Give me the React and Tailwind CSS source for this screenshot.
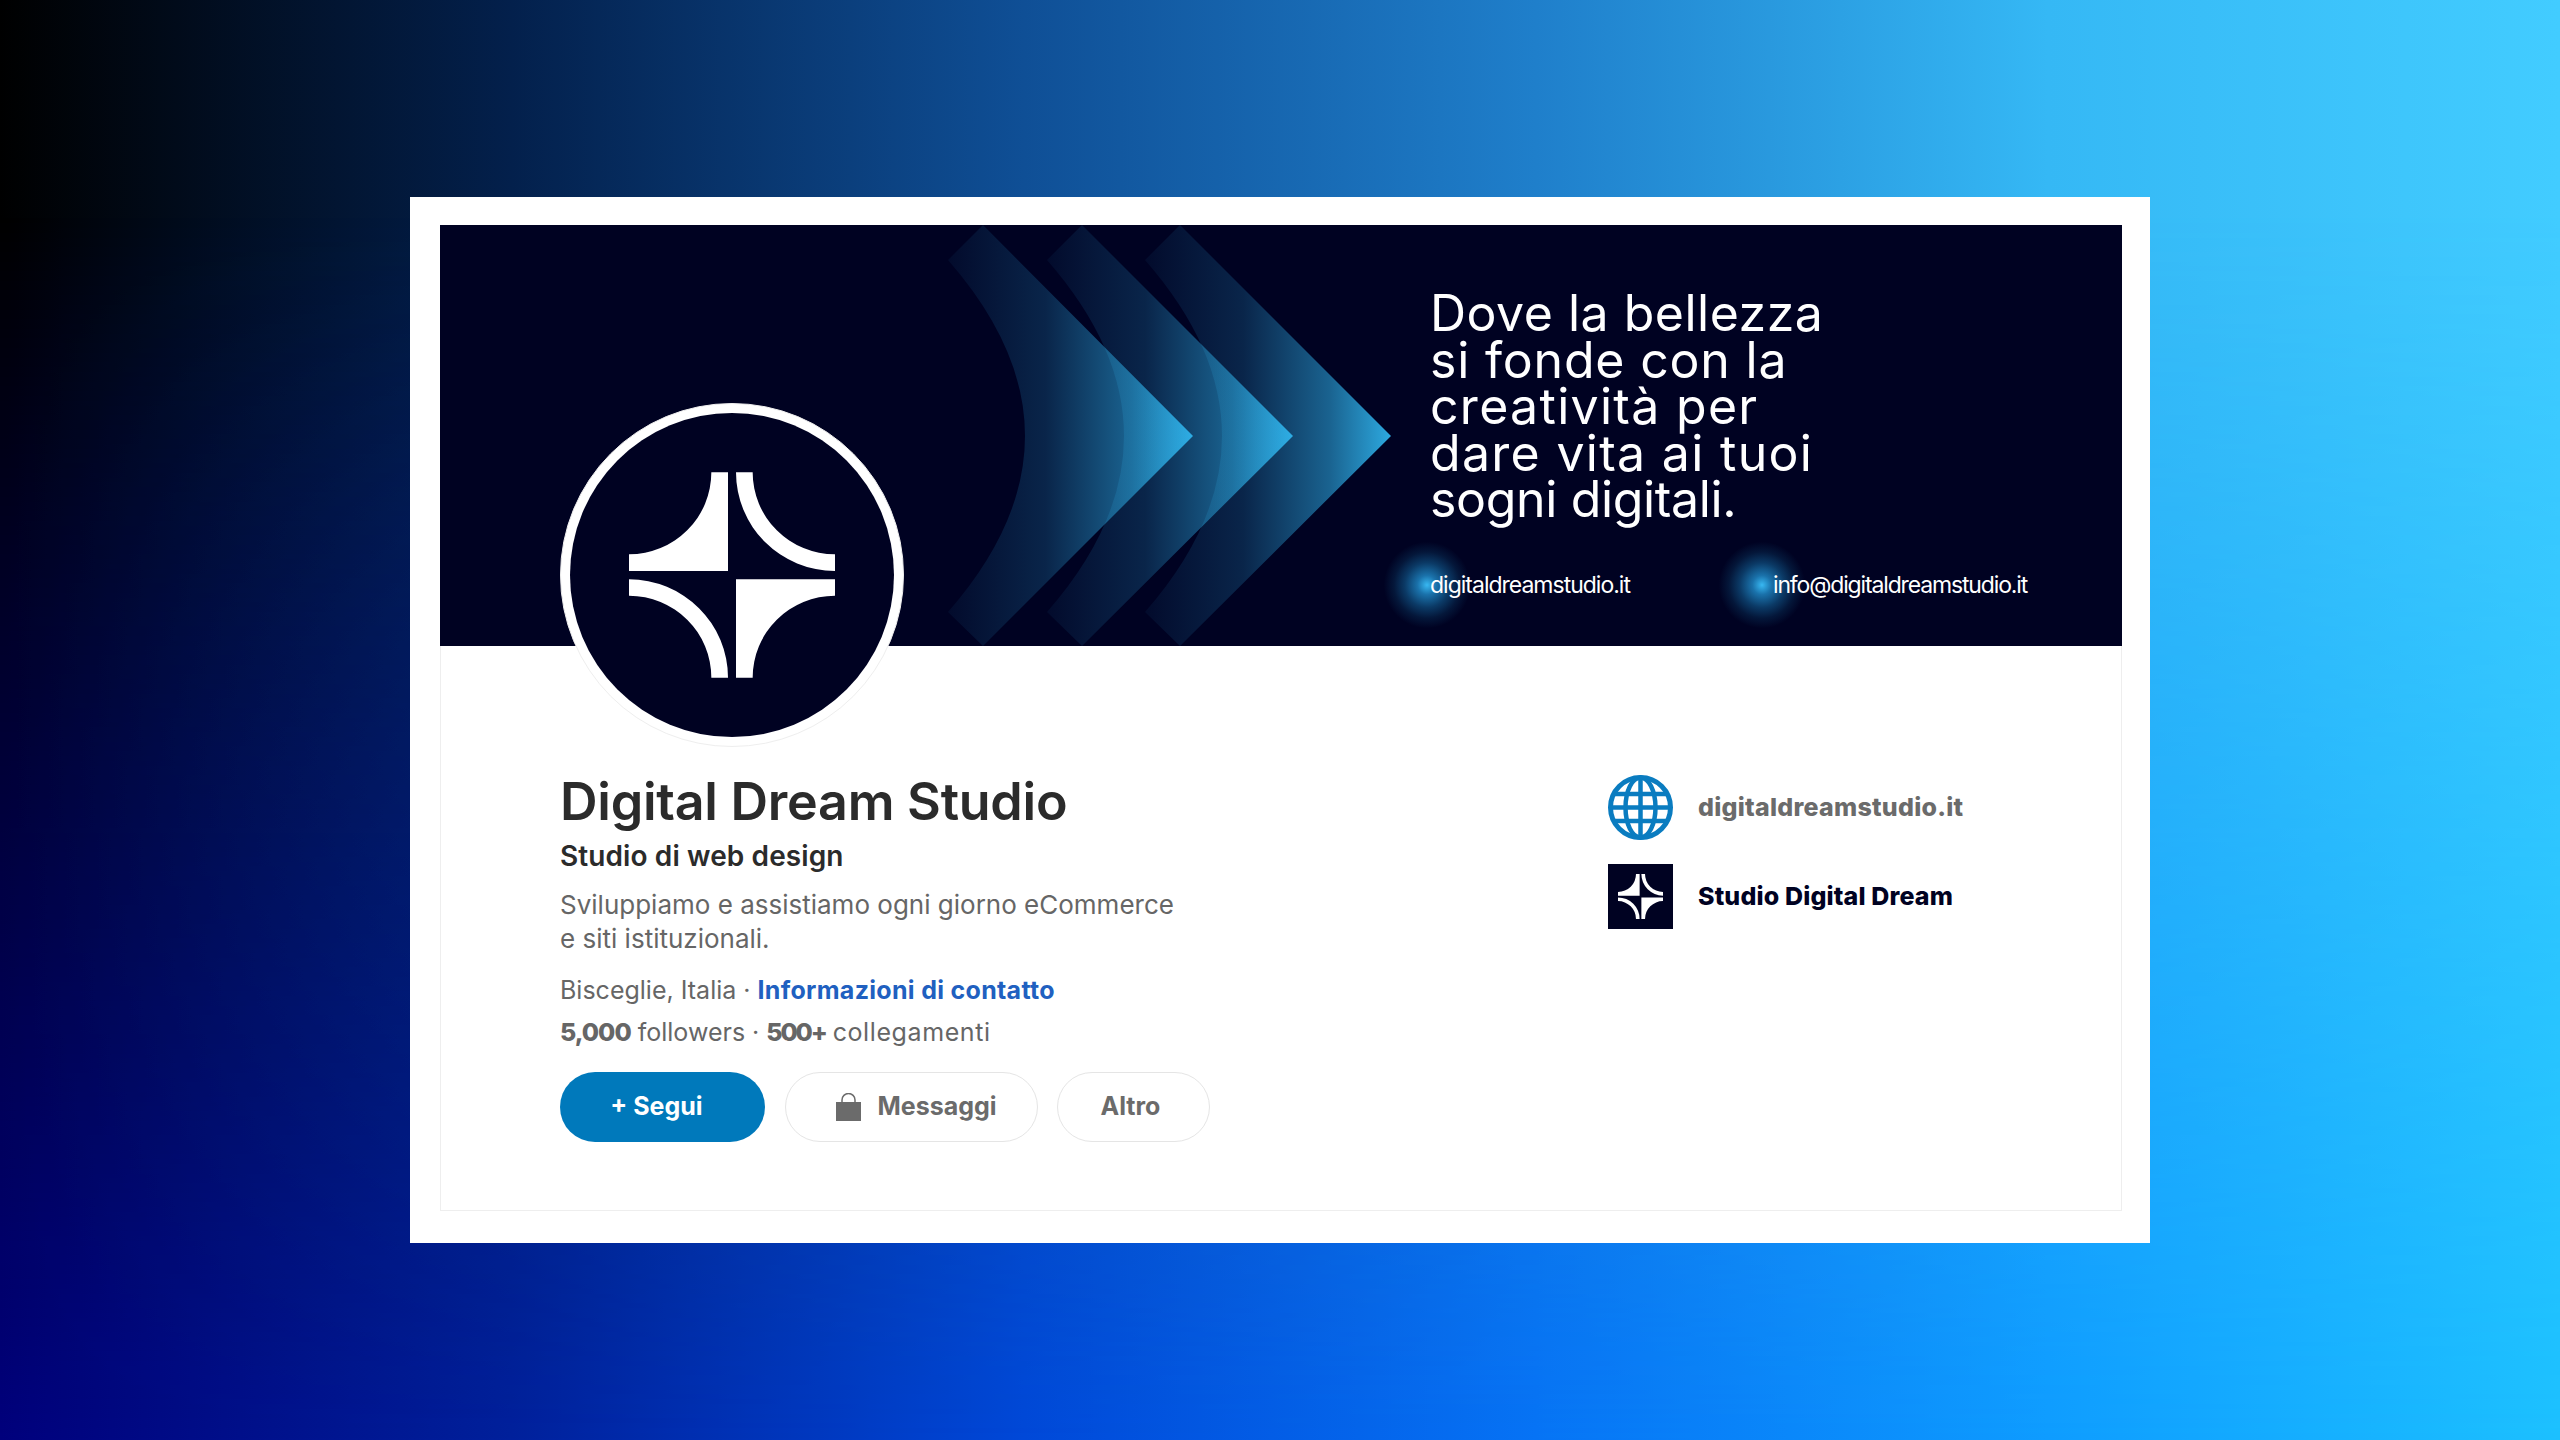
import React from 'react';

function StarLogo({ className }) {
    return (
        <svg className={className} viewBox="57 70 618 616" fill="#ffffff">
            <path d="M304 70H354V366H57V316A247 246 0 0 0 304 70Z" />
            <path d="M378 70H428A247 246 0 0 0 675 316V366A297 296 0 0 1 378 70Z" />
            <path d="M57 391A297 295 0 0 1 354 686H304A247 246 0 0 0 57 440Z" />
            <path d="M378 391H675V440A247 246 0 0 0 428 686H378Z" />
        </svg>
    );
}

function Chevrons() {
    const items = [
        { id: 'c1', top: 983, tip: 1193 },
        { id: 'c2', top: 1082, tip: 1293 },
        { id: 'c3', top: 1180, tip: 1391 },
    ];
    return (
        <svg className="absolute inset-0 w-full h-full" viewBox="440 225 1682 421" preserveAspectRatio="none">
            <defs>
                {items.map((c) => (
                    <linearGradient key={c.id} id={c.id} gradientUnits="userSpaceOnUse" x1={c.top - 35} x2={c.tip} y1="0" y2="0">
                        <stop offset="0" stopColor="#2fb2ea" stopOpacity="0.05" />
                        <stop offset="0.4" stopColor="#2fb2ea" stopOpacity="0.2" />
                        <stop offset="0.75" stopColor="#2fb2ea" stopOpacity="0.55" />
                        <stop offset="1" stopColor="#2fb2ea" stopOpacity="0.95" />
                    </linearGradient>
                ))}
            </defs>
            {items.map((c) => (
                <path
                    key={c.id}
                    fill={`url(#${c.id})`}
                    d={`M${c.top} 225L${c.tip} 436L${c.top} 646L${c.top - 35} 612Q${c.top + 119} 436 ${c.top - 35} 260Z`}
                />
            ))}
        </svg>
    );
}

function Glow({ className }) {
    return (
        <span className={`absolute w-[90px] h-[90px] rounded-full bg-[radial-gradient(circle,#38b8f2_0%,#1a72ab_15%,#0b3a66_35%,#04173a_52%,transparent_68%)] ${className}`}></span>
    );
}

function Globe() {
    return (
        <svg className="w-[65px] h-[65px] shrink-0" viewBox="0 0 65 65" fill="none" stroke="#0a7cc0">
            <circle cx="32.5" cy="32.5" r="30" fill="#ffffff" strokeWidth="5" />
            <ellipse cx="32.5" cy="32.5" rx="15" ry="30" strokeWidth="4.500" />
            <path d="M32.5 2V63M2 32.5H63M7 19H58M7 46H58" strokeWidth="4.500" />
        </svg>
    );
}

function BagIcon() {
    return (
        <svg className="w-[25px] h-[28px]" viewBox="0 0 25 28" fill="#6b6b6b">
            <rect x="0" y="9" width="25" height="19" />
            <path d="M6 10V7a6.500 6.500 0 0 1 13 0V10" fill="none" stroke="#6b6b6b" strokeWidth="1.500" />
        </svg>
    );
}

function App() {
    return (
        <div className="relative w-full h-[1440px] flex items-center justify-center overflow-hidden font-['Inter',sans-serif] bg-[linear-gradient(90deg,#000000_0%,#03204c_20%,#0f4f96_40%,#1f7fcb_60%,#35b8f5_80%,#42ccff_100%)]">
            <div className="absolute inset-0 bg-[linear-gradient(90deg,#00007c_0%,#00209c_20%,#0048d8_40%,#0673f5_60%,#0e9cff_80%,#1cc0ff_100%)] [mask-image:linear-gradient(to_bottom,transparent_15%,black_100%)]"></div>

            <div className="relative w-[1740px] h-[1046px] bg-white pl-[30px] pr-[28px] pt-[28px] pb-[32px]">
                <div className="h-full border border-[#eeeeee]">
                    <div className="relative h-[421px] bg-[#000222] overflow-hidden -m-px mb-0">
                        <Chevrons />
                        <div className="relative pl-[990px] pt-[65px] text-white">
                            <h2 className="text-[50px] leading-[46.5px] font-normal">
                                <span className="block tracking-[0.5px]">Dove la bellezza</span>
                                <span className="block tracking-[0.8px]">si fonde con la</span>
                                <span className="block tracking-[1.3px]">creatività per</span>
                                <span className="block tracking-[1.3px]">dare vita ai tuoi</span>
                                <span className="block tracking-[-0.35px]">sogni digitali.</span>
                            </h2>
                            <div className="relative flex mt-[47px] text-[23px] leading-[30px] tracking-[-1px]">
                                <Glow className="left-[-48px] top-[-30px]" />
                                <span className="relative w-[343px]">digitaldreamstudio.it</span>
                                <Glow className="left-[287px] top-[-30px]" />
                                <span className="relative tracking-[-1.15px]">info@digitaldreamstudio.it</span>
                            </div>
                        </div>
                    </div>

                    <div className="pl-[119px] pr-[157px]">
                        <div className="relative -mt-[243px] w-[344px] h-[344px] rounded-full bg-white border border-[#eeeeee] p-[9px]">
                            <div className="w-full h-full rounded-full bg-[#000222] flex items-center justify-center">
                                <StarLogo className="w-[206px] h-[206px]" />
                            </div>
                        </div>

                        <div className="flex justify-between">
                            <div className="mt-[25px]">
                                <h1 className="text-[52px] leading-[60px] font-semibold text-[#2b2b2b] tracking-[-0.25px]">Digital Dream Studio</h1>
                                <p className="mt-[6px] text-[28px] leading-[36px] font-semibold text-[#2b2b2b] tracking-[0.1px]">Studio di web design</p>
                                <p className="mt-[14px] text-[26px] leading-[34px] text-[#666666]">
                                    Sviluppiamo e assistiamo ogni giorno eCommerce<br />e siti istituzionali.
                                </p>
                                <p className="mt-[17px] text-[25px] leading-[34px] text-[#666666]">
                                    Bisceglie, Italia · <span className="font-bold text-[#2060c0] tracking-[0.3px]">Informazioni di contatto</span>
                                </p>
                                <p className="mt-[8px] text-[25px] leading-[34px] text-[#666666]">
                                    <span className="font-extrabold tracking-[-1px]">5,000</span> followers · <span className="font-extrabold tracking-[-2.2px]">500+</span> <span className="tracking-[0.6px]">collegamenti</span>
                                </p>
                                <div className="mt-[23px] flex gap-[20px]">
                                    <button className="w-[205px] h-[70px] rounded-full bg-[#0079bb] text-white text-[25px] font-bold pr-[12px]">+ Segui</button>
                                    <button className="w-[253px] -mr-px h-[70px] rounded-full border border-[#e5e5e5] bg-white text-[#6b6b6b] text-[25px] font-bold flex items-center justify-center gap-[16px] pl-[10px]">
                                        <BagIcon />
                                        Messaggi
                                    </button>
                                    <button className="w-[153px] h-[70px] rounded-full border border-[#e5e5e5] bg-white text-[#6b6b6b] text-[25px] font-bold pr-[6px]">Altro</button>
                                </div>
                            </div>

                            <div className="mt-[28px] w-[356px] flex flex-col gap-[24px]">
                                <div className="flex items-center gap-[25px]">
                                    <Globe />
                                    <span className="text-[25px] font-extrabold text-[#6b6b6b] tracking-[0.25px]">digitaldreamstudio.it</span>
                                </div>
                                <div className="flex items-center gap-[25px]">
                                    <div className="w-[65px] h-[65px] bg-[#000222] flex items-center justify-center shrink-0">
                                        <StarLogo className="w-[45px] h-[45px]" />
                                    </div>
                                    <span className="text-[25px] font-extrabold text-[#000222] tracking-[0.15px]">Studio Digital Dream</span>
                                </div>
                            </div>
                        </div>
                    </div>
                </div>
            </div>
        </div>
    );
}

export default App;
